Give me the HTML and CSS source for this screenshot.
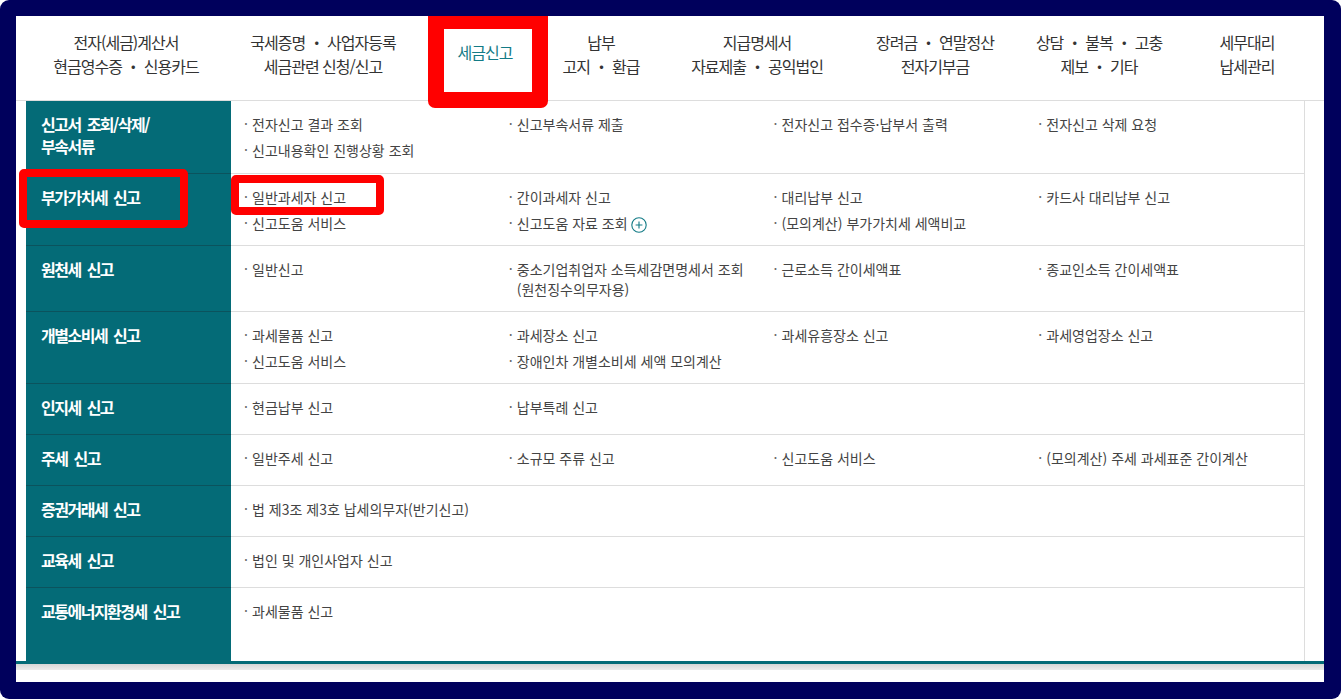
FILE: index.html
```html
<!DOCTYPE html>
<html lang="ko">
<head>
  <meta charset="utf-8">
  <title>세금신고</title>
  <link rel="stylesheet" href="styles.css">
</head>
<body>
<div class="frame">
  <div class="screen">
    <ul class="gnb">
      <li>전자(세금)계산서<br>현금영수증 ・ 신용카드</li>
      <li>국세증명 ・ 사업자등록<br>세금관련 신청/신고</li>
      <li class="on">세금신고</li>
      <li>납부<br>고지 ・ 환급</li>
      <li>지급명세서<br>자료제출 ・ 공익법인</li>
      <li>장려금 ・ 연말정산<br>전자기부금</li>
      <li>상담 ・ 불복 ・ 고충<br>제보 ・ 기타</li>
      <li>세무대리<br>납세관리</li>
    </ul>

    <div class="sub-wrap">
      <div class="sub">
        <div class="sub-row">
          <div class="sub-tit">신고서 조회/삭제/<br>부속서류</div>
          <ul class="sub-list">
            <li>전자신고 결과 조회</li>
            <li>신고부속서류 제출</li>
            <li>전자신고 접수증·납부서 출력</li>
            <li>전자신고 삭제 요청</li>
            <li>신고내용확인 진행상황 조회</li>
          </ul>
        </div>
        <div class="sub-row">
          <div class="sub-tit">부가가치세 신고</div>
          <ul class="sub-list">
            <li>일반과세자 신고</li>
            <li>간이과세자 신고</li>
            <li>대리납부 신고</li>
            <li>카드사 대리납부 신고</li>
            <li>신고도움 서비스</li>
            <li>신고도움 자료 조회<svg class="ico-more" width="16" height="16" viewBox="0 0 16 16"><circle cx="8" cy="8" r="7.2" fill="none" stroke="#137b86" stroke-width="1.1"/><path d="M8 4.6v6.8M4.6 8h6.8" stroke="#137b86" stroke-width="1.1"/></svg></li>
            <li>(모의계산) 부가가치세 세액비교</li>
          </ul>
        </div>
        <div class="sub-row">
          <div class="sub-tit">원천세 신고</div>
          <ul class="sub-list">
            <li>일반신고</li>
            <li>중소기업취업자 소득세감면명세서 조회<br>(원천징수의무자용)</li>
            <li>근로소득 간이세액표</li>
            <li>종교인소득 간이세액표</li>
          </ul>
        </div>
        <div class="sub-row">
          <div class="sub-tit">개별소비세 신고</div>
          <ul class="sub-list">
            <li>과세물품 신고</li>
            <li>과세장소 신고</li>
            <li>과세유흥장소 신고</li>
            <li>과세영업장소 신고</li>
            <li>신고도움 서비스</li>
            <li>장애인차 개별소비세 세액 모의계산</li>
          </ul>
        </div>
        <div class="sub-row">
          <div class="sub-tit">인지세 신고</div>
          <ul class="sub-list">
            <li>현금납부 신고</li>
            <li>납부특례 신고</li>
          </ul>
        </div>
        <div class="sub-row">
          <div class="sub-tit">주세 신고</div>
          <ul class="sub-list">
            <li>일반주세 신고</li>
            <li>소규모 주류 신고</li>
            <li>신고도움 서비스</li>
            <li>(모의계산) 주세 과세표준 간이계산</li>
          </ul>
        </div>
        <div class="sub-row">
          <div class="sub-tit">증권거래세 신고</div>
          <ul class="sub-list">
            <li>법 제3조 제3호 납세의무자(반기신고)</li>
          </ul>
        </div>
        <div class="sub-row">
          <div class="sub-tit">교육세 신고</div>
          <ul class="sub-list">
            <li>법인 및 개인사업자 신고</li>
          </ul>
        </div>
        <div class="sub-row">
          <div class="sub-tit">교통에너지환경세 신고</div>
          <ul class="sub-list">
            <li>과세물품 신고</li>
          </ul>
        </div>
      </div>
    </div>
    <div class="sub-shadow"></div>
  </div>

  <!-- red guide boxes drawn over the capture -->
  <span class="mark mark-tab"></span>
  <span class="mark mark-vat"></span>
  <span class="mark mark-item"></span>
</div>
</body>
</html>
```

FILE: styles.css
```css
      *{
          box-sizing:border-box;
      }
      body{
          margin:0;
          font-family:"Noto Sans CJK KR","Liberation Sans",sans-serif;
          color:#444;
      }
      ul{
          margin:0;
          padding:0;
          list-style:none;
      }
      .frame{
          position:relative;
          width:1341px;
          height:699px;
          padding:16px 17px 17px 16px;
          background:#00005c;
          border-radius:9px;
      }
      .screen{
          height:100%;
          background:#fff;
      }

      /* top menu */
      .gnb{
          display:flex;
          align-items:center;
          height:85px;
          padding:0 0 8px 10px;
          border-bottom:1px solid #ddd;
      }
      .gnb li{
          flex:none;
          text-align:center;
          font-size:16px;
          letter-spacing:-1px;
          line-height:24px;
          color:#333;
      }
      .gnb li:nth-child(1){ width:200px; }
      .gnb li:nth-child(2){ width:194px; }
      .gnb li:nth-child(3){ width:130px; }
      .gnb li:nth-child(4){ width:102px; }
      .gnb li:nth-child(5){ width:210px; }
      .gnb li:nth-child(6){ width:146px; }
      .gnb li:nth-child(7){ width:182px; }
      .gnb li:nth-child(8){ width:114px; }
      .gnb li.on{
          color:#137b86;
          margin-top:-4px;
      }

      /* sub menu panel */
      .sub-wrap{
          border-bottom:3px solid #046b77;
      }
      .sub{
          width:1279px;
          margin-left:10px;
          border-right:1px solid #ddd;
      }
      .sub-row{
          display:flex;
      }
      .sub-tit{
          flex:none;
          width:205px;
          padding:12px 15px 16px;
          background:#046b77;
          border-bottom:1px solid #0b535d;
          color:#fff;
          font-size:16px;
          font-weight:bold;
          letter-spacing:-1.5px;
          word-spacing:3px;
          line-height:22px;
      }
      .sub-list{
          flex:1;
          display:grid;
          grid-template-columns:repeat(4,1fr);
          row-gap:6px;
          align-content:start;
          padding:13px 0 12px 14px;
          border-bottom:1px solid #ddd;
          font-size:14px;
          line-height:20px;
      }
      .sub-list li{
          position:relative;
          padding-left:7px;
      }
      .sub-list li::before{
          content:"·";
          position:absolute;
          left:-1px;
          top:-1px;
          color:#666;
      }
      .sub-row:last-child{
          min-height:73px;
      }
      .sub-row:last-child .sub-tit,
      .sub-row:last-child .sub-list{
          border-bottom:0;
      }
      .ico-more{
          vertical-align:-4px;
          margin-left:3px;
      }
      .sub-shadow{
          height:6px;
          background:linear-gradient(#d6d6d6,#ececec);
      }

      /* red guide boxes */
      .mark{
          position:absolute;
          border:8px solid #f00;
          border-radius:5px;
      }
      .mark-tab{
          left:428px;
          top:16px;
          width:120px;
          height:92px;
          border-width:13px 16px 16px;
          border-radius:0 0 7px 7px;
      }
      .mark-vat{
          left:19px;
          top:169px;
          width:169px;
          height:59px;
      }
      .mark-item{
          left:231px;
          top:175px;
          width:153px;
          height:40px;
      }
```
